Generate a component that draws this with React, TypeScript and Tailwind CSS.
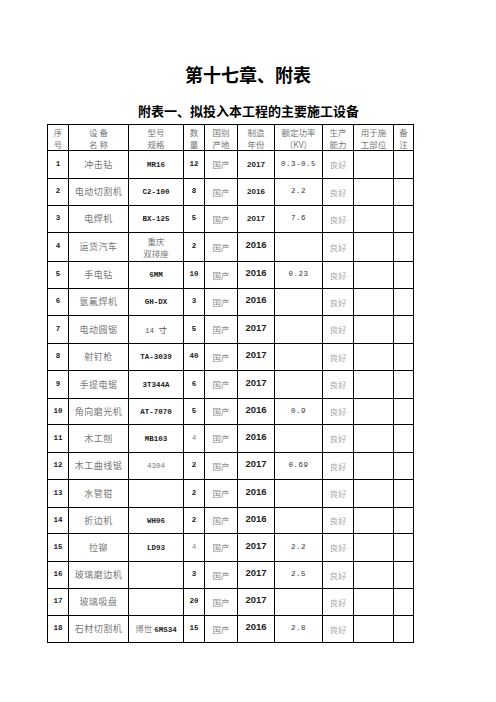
import React from "react";

interface Row {
  no: string;
  name: string;
  spec: string[];
  qty: string;
  origin: string;
  year: string;
  power: string;
  state: string;
}

const rows: Row[] = [
  { no: "1", name: "冲击钻", spec: ["MR16"], qty: "12", origin: "国产", year: "2017", power: "0.3-0.5", state: "良好" },
  { no: "2", name: "电动切割机", spec: ["C2-100"], qty: "8", origin: "国产", year: "2016", power: "2.2", state: "良好" },
  { no: "3", name: "电焊机", spec: ["BX-125"], qty: "5", origin: "国产", year: "2017", power: "7.6", state: "良好" },
  { no: "4", name: "运货汽车", spec: ["重庆", "双排座"], qty: "2", origin: "国产", year: "2016", power: "", state: "良好" },
  { no: "5", name: "手电钻", spec: ["6MM"], qty: "10", origin: "国产", year: "2016", power: "0.23", state: "良好" },
  { no: "6", name: "氩氟焊机", spec: ["GH-DX"], qty: "3", origin: "国产", year: "2016", power: "", state: "良好" },
  { no: "7", name: "电动圆锯", spec: ["14 寸"], qty: "5", origin: "国产", year: "2017", power: "", state: "良好" },
  { no: "8", name: "射钉枪", spec: ["TA-3039"], qty: "40", origin: "国产", year: "2017", power: "", state: "良好" },
  { no: "9", name: "手提电锯", spec: ["3T344A"], qty: "6", origin: "国产", year: "2017", power: "", state: "良好" },
  { no: "10", name: "角向磨光机", spec: ["AT-7070"], qty: "5", origin: "国产", year: "2016", power: "0.9", state: "良好" },
  { no: "11", name: "木工刨", spec: ["MB103"], qty: "4", origin: "国产", year: "2016", power: "", state: "良好" },
  { no: "12", name: "木工曲线锯", spec: ["4304"], qty: "2", origin: "国产", year: "2017", power: "0.69", state: "良好" },
  { no: "13", name: "水管钳", spec: [""], qty: "2", origin: "国产", year: "2016", power: "", state: "良好" },
  { no: "14", name: "折边机", spec: ["WH06"], qty: "2", origin: "国产", year: "2016", power: "", state: "良好" },
  { no: "15", name: "拉铆", spec: ["LD93"], qty: "4", origin: "国产", year: "2017", power: "2.2", state: "良好" },
  { no: "16", name: "玻璃磨边机", spec: [""], qty: "3", origin: "国产", year: "2017", power: "2.5", state: "良好" },
  { no: "17", name: "玻璃吸盘", spec: [""], qty: "20", origin: "国产", year: "2017", power: "", state: "良好" },
  { no: "18", name: "石材切割机", spec: ["博世 6MS34"], qty: "15", origin: "国产", year: "2016", power: "2.8", state: "良好" },
];

const headers: string[][] = [
  ["序", "号"],
  ["设 备", "名 称"],
  ["型号", "规格"],
  ["数", "量"],
  ["国别", "产地"],
  ["制造", "年份"],
  ["额定功率", "（KV）"],
  ["生产", "能力"],
  ["用于施", "工部位"],
  ["备", "注"],
];

const widths = [21, 60, 55, 21, 33, 37, 48, 31, 40, 20];
const rowHeights = [28, 27, 27, 29, 27, 27, 28, 27, 28, 26, 28, 27, 28, 26, 28, 27, 27, 27];

const cjk = { fontFamily: '"Noto Sans CJK SC", "Liberation Sans", sans-serif' };
const mono = { fontFamily: '"Liberation Mono", "Noto Sans CJK SC", monospace' };
const sans = { fontFamily: '"Liberation Sans", "Noto Sans CJK SC", sans-serif' };

const cell = "border border-black text-center align-middle p-0";

export default function App() {
  return (
    <div className="w-[496px] h-[702px] bg-white pt-[62px]" style={cjk}>
      <h1 className="text-center text-[18px] leading-[24px] font-bold text-black">第十七章、附表</h1>
      <h2 className="mt-[17px] text-center text-[13px] leading-[16px] font-bold text-black pl-[1px]">
        附表一、拟投入本工程的主要施工设备
      </h2>
      <div className="pl-[47px] mt-[5px]">
        <table className="border-collapse table-fixed w-[366px]">
          <colgroup>
            {widths.map((w, i) => (
              <col key={i} style={{ width: w }} />
            ))}
          </colgroup>
          <thead>
            <tr className="h-[26px]">
              {headers.map((h, i) => (
                <th key={i} className={`${cell} font-normal text-[8.5px] leading-[12px] text-[#777]`}>
                  <div className="whitespace-pre">{h[0]}</div>
                  <div className="whitespace-pre">{h[1]}</div>
                </th>
              ))}
            </tr>
          </thead>
          <tbody>
            {rows.map((r, i) => (
              <tr key={r.no} style={{ height: rowHeights[i] }}>
                <td className={`${cell} text-[7.5px] font-bold text-[#222]`} style={mono}>
                  {r.no}
                </td>
                <td className={`${cell} text-[9px] text-[#777] tracking-[0.5px]`}>{r.name}</td>
                <td className={`${cell} text-[7.5px] leading-[12px] font-bold text-[#222]`} style={mono}>
                  {r.spec.length > 1 ? (
                    r.spec.map((s) => (
                      <div key={s} className="text-[8.5px] font-normal text-[#777]" style={cjk}>
                        {s}
                      </div>
                    ))
                  ) : r.spec[0] === "14 寸" ? (
                    <span className="font-normal text-[#555]">
                      14 <span className="text-[8.5px]" style={cjk}>寸</span>
                    </span>
                  ) : r.spec[0] === "博世 6MS34" ? (
                    <span>
                      <span className="font-normal text-[8.5px] text-[#888]" style={cjk}>博世 </span>6MS34
                    </span>
                  ) : r.spec[0] === "4304" ? (
                    <span className="font-normal text-[#777]">4304</span>
                  ) : (
                    r.spec[0]
                  )}
                </td>
                <td
                  className={`${cell} text-[7.5px] font-bold ${r.qty === "4" ? "text-[#888] font-normal" : "text-[#222]"}`}
                  style={mono}
                >
                  {r.qty}
                </td>
                <td className={`${cell} text-[8.5px] text-[#888]`}>{r.origin}</td>
                <td className={`${cell} text-[#222] font-bold ${i < 3 ? "text-[8px]" : "text-[9.5px] pb-[3px]"}`} style={sans}>
                  {r.year}
                </td>
                <td className={`${cell} text-[7.5px] text-[#333] tracking-[0.5px]`} style={mono}>
                  {r.power}
                </td>
                <td className={`${cell} text-[8.5px] text-[#aaa]`}>{r.state}</td>
                <td className={cell}></td>
                <td className={cell}></td>
              </tr>
            ))}
          </tbody>
        </table>
      </div>
    </div>
  );
}
